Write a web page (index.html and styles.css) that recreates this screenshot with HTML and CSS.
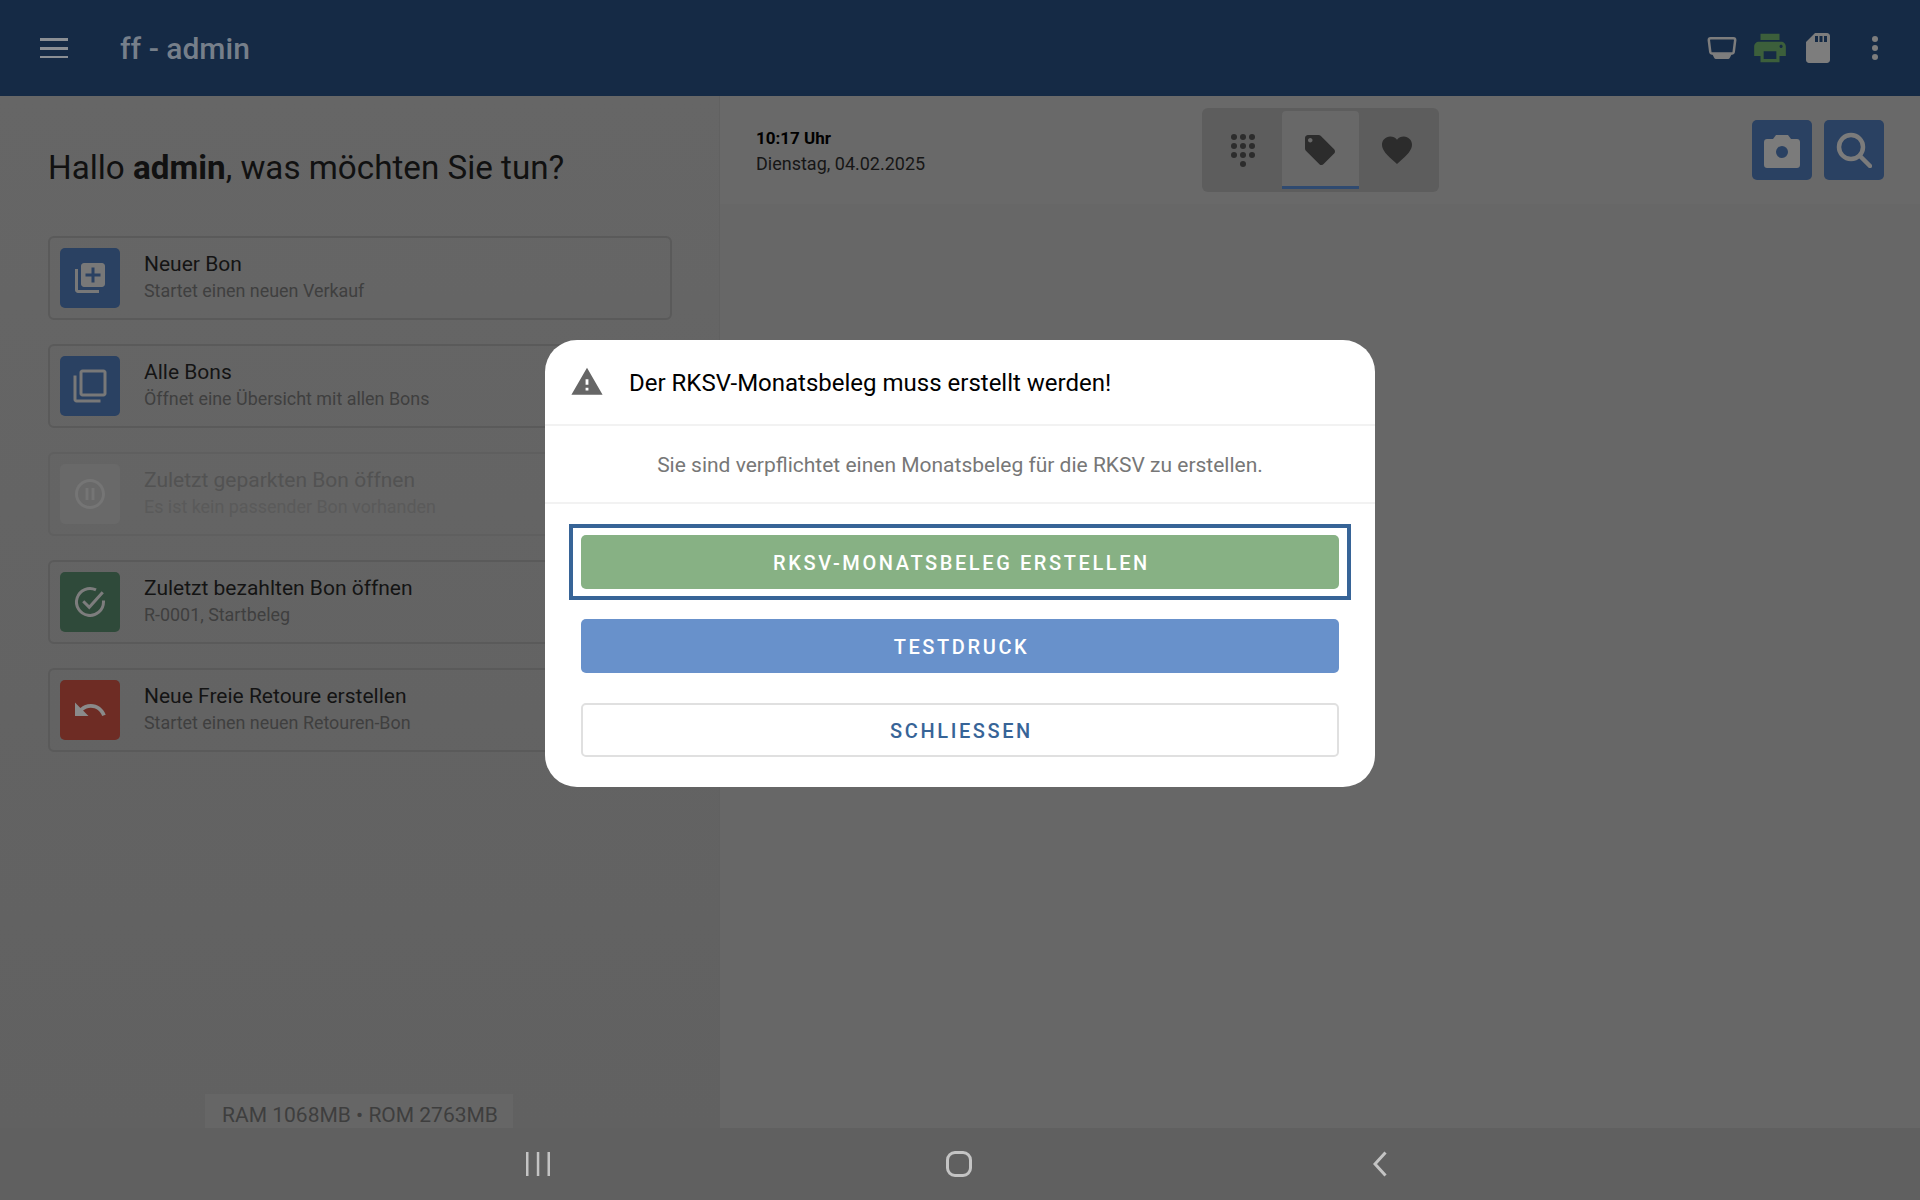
FILE: index.html
```html
<!DOCTYPE html>
<html lang="de">
<head>
  <meta charset="UTF-8" />
  <title>ff - admin</title>
  <meta name="viewport" content="width=device-width, initial-scale=1.0">
  <link rel="stylesheet" href="styles.css">
</head>
<body>
  <div class="app">
    <header class="topbar">
      <svg class="menu-icon" viewBox="0 0 28 20"><path d="M0 0h28v3H0zM0 9h28v3H0zM0 18h28v2.6H0z"/></svg>
      <div class="app-title">ff - admin</div>
      <div class="status-icons">
        <svg class="status-icon grey" viewBox="0 0 36 36"><path d="M6.500 8.300h23c1 0 1.700.8 1.700 1.800l-1.500 12c-.1.7-.7 1.400-1.500 1.400H7.800c-.8 0-1.400-.7-1.500-1.400l-1.500-12c0-1 .7-1.800 1.700-1.800z" fill="none" stroke="currentColor" stroke-width="2.500"/><path d="M8 23.500h20l-2 4c-.5 1-1.300 1.500-2.500 1.500h-11c-1.200 0-2-.5-2.500-1.500z"/></svg>
        <svg class="status-icon printer" viewBox="0 0 24 24"><path d="M19 8H5c-1.660 0-3 1.340-3 3v6h4v4h12v-4h4v-6c0-1.660-1.340-3-3-3zm-3 11H8v-5h8v5zm3-7c-.55 0-1-.45-1-1s.45-1 1-1 1 .45 1 1-.45 1-1 1zm-1-9H6v4h12V3z"/></svg>
        <svg class="status-icon grey" viewBox="0 0 24 24"><path d="M18 2h-8L4.020 8 4 20c0 1.100.9 2 2 2h12c1.100 0 2-.9 2-2V4c0-1.100-.9-2-2-2zm-6 6h-2V4h2v4zm3 0h-2V4h2v4zm3 0h-2V4h2v4z"/></svg>
        <svg class="status-icon grey more" viewBox="0 0 36 36"><circle cx="18" cy="9" r="3"/><circle cx="18" cy="18" r="3"/><circle cx="18" cy="27" r="3"/></svg>
      </div>
    </header>

    <main class="content">
      <section class="start-pane">
        <h1 class="greeting">Hallo <b>admin</b>, was möchten Sie tun?</h1>

        <div class="action-card">
          <div class="action-icon blue">
            <svg viewBox="0 0 24 24"><path d="M4 6H2v14c0 1.100.9 2 2 2h14v-2H4V6zm16-4H8c-1.100 0-2 .9-2 2v12c0 1.100.9 2 2 2h12c1.100 0 2-.9 2-2V4c0-1.100-.9-2-2-2zm-1 9h-4v4h-2v-4H9V9h4V5h2v4h4v2z"/></svg>
          </div>
          <div class="action-text">
            <div class="action-title">Neuer Bon</div>
            <div class="action-sub">Startet einen neuen Verkauf</div>
          </div>
        </div>

        <div class="action-card">
          <div class="action-icon blue">
            <svg viewBox="0 0 24 24"><path d="M3 5H1v16c0 1.100.9 2 2 2h16v-2H3V5zm18-4H7c-1.100 0-2 .9-2 2v14c0 1.100.9 2 2 2h14c1.100 0 2-.9 2-2V3c0-1.100-.9-2-2-2zm0 16H7V3h14v14z"/></svg>
          </div>
          <div class="action-text">
            <div class="action-title">Alle Bons</div>
            <div class="action-sub">Öffnet eine Übersicht mit allen Bons</div>
          </div>
        </div>

        <div class="action-card disabled">
          <div class="action-icon">
            <svg viewBox="0 0 24 24"><path d="M9 16h2V8H9v8zm3-14C6.480 2 2 6.480 2 12s4.480 10 10 10 10-4.480 10-10S17.520 2 12 2zm0 18c-4.410 0-8-3.590-8-8s3.590-8 8-8 8 3.590 8 8-3.590 8-8 8zm1-4h2V8h-2v8z"/></svg>
          </div>
          <div class="action-text">
            <div class="action-title">Zuletzt geparkten Bon öffnen</div>
            <div class="action-sub">Es ist kein passender Bon vorhanden</div>
          </div>
        </div>

        <div class="action-card">
          <div class="action-icon green">
            <svg viewBox="0 0 24 24"><path d="M21 11v1a9 9 0 1 1-5-8.100" fill="none" stroke="currentColor" stroke-width="2"/><path d="M7.500 11.500l4 4 9-10" fill="none" stroke="currentColor" stroke-width="2"/></svg>
          </div>
          <div class="action-text">
            <div class="action-title">Zuletzt bezahlten Bon öffnen</div>
            <div class="action-sub">R-0001, Startbeleg</div>
          </div>
        </div>

        <div class="action-card">
          <div class="action-icon red">
            <svg viewBox="0 0 24 24"><path d="M12.500 8c-2.650 0-5.050.99-6.900 2.600L2 7v9h9l-3.620-3.620c1.390-1.160 3.160-1.880 5.120-1.880 3.540 0 6.550 2.310 7.600 5.500l2.370-.78C21.080 11.030 17.150 8 12.500 8z"/></svg>
          </div>
          <div class="action-text">
            <div class="action-title">Neue Freie Retoure erstellen</div>
            <div class="action-sub">Startet einen neuen Retouren-Bon</div>
          </div>
        </div>

        <div class="mem-info">RAM 1068MB • ROM 2763MB</div>
      </section>

      <section class="item-pane">
        <div class="toolbar">
          <div class="clock">
            <div class="clock-time">10:17 Uhr</div>
            <div class="clock-date">Dienstag, 04.02.2025</div>
          </div>
          <div class="tabs">
            <div class="tab">
              <svg class="tab-grid" viewBox="0 0 24 33"><circle cx="3" cy="3" r="3"/><circle cx="12" cy="3" r="3"/><circle cx="21" cy="3" r="3"/><circle cx="3" cy="12" r="3"/><circle cx="12" cy="12" r="3"/><circle cx="21" cy="12" r="3"/><circle cx="3" cy="21" r="3"/><circle cx="12" cy="21" r="3"/><circle cx="21" cy="21" r="3"/><circle cx="12" cy="30" r="3"/></svg>
            </div>
            <div class="tab active">
              <svg class="tab-icon" viewBox="0 0 24 24"><path d="M21.410 11.580l-9-9C12.050 2.220 11.550 2 11 2H4c-1.100 0-2 .9-2 2v7c0 .55.22 1.050.59 1.420l9 9c.36.36.86.58 1.410.58.55 0 1.050-.22 1.410-.59l7-7c.37-.36.59-.86.59-1.410 0-.55-.23-1.060-.59-1.420zM5.500 7C4.670 7 4 6.330 4 5.500S4.670 4 5.500 4 7 4.670 7 5.500 6.330 7 5.500 7z"/></svg>
            </div>
            <div class="tab">
              <svg class="tab-icon" viewBox="0 0 24 24"><path d="M12 21.350l-1.450-1.320C5.400 15.360 2 12.280 2 8.500 2 5.420 4.420 3 7.500 3c1.740 0 3.410.81 4.500 2.090C13.090 3.810 14.760 3 16.500 3 19.580 3 22 5.420 22 8.500c0 3.780-3.400 6.860-8.550 11.540L12 21.350z"/></svg>
            </div>
          </div>
          <div class="tool-buttons">
            <div class="tool-button">
              <svg viewBox="0 0 36 36"><path fill-rule="evenodd" d="M12 3h12l3 4h6c1.700 0 3 1.300 3 3v23c0 1.700-1.300 3-3 3H3c-1.700 0-3-1.300-3-3V10c0-1.700 1.300-3 3-3h6zm6 11a6 6 0 1 0 0 12 6 6 0 0 0 0-12z"/></svg>
            </div>
            <div class="tool-button">
              <svg viewBox="0 0 36 36"><circle cx="15" cy="15" r="12" fill="none" stroke="currentColor" stroke-width="4.500"/><path d="M24 24l10 10" fill="none" stroke="currentColor" stroke-width="4.500" stroke-linecap="round"/></svg>
            </div>
          </div>
        </div>
      </section>
    </main>

    <nav class="system-nav">
      <div class="nav-slot">
        <svg class="nav-recents" viewBox="0 0 24 24"><path d="M0 0h2.500v24H0zM10.800 0h2.500v24h-2.500zM21.500 0H24v24h-2.500z"/></svg>
      </div>
      <div class="nav-slot"><span class="nav-home"></span></div>
      <div class="nav-slot">
        <svg class="nav-back" viewBox="0 0 14 26"><path d="M12.500 1.500L2 13l10.500 11.500" fill="none" stroke="currentColor" stroke-width="3"/></svg>
      </div>
    </nav>

    <div class="dialog-layer">
      <div class="dialog">
        <div class="dialog-head">
          <svg class="warn-icon" viewBox="0 0 24 24"><path d="M1 21h22L12 2 1 21zm12-3h-2v-2h2v2zm0-4h-2v-4h2v4z"/></svg>
          <div class="dialog-title">Der RKSV-Monatsbeleg muss erstellt werden!</div>
        </div>
        <div class="dialog-body">Sie sind verpflichtet einen Monatsbeleg für die RKSV zu erstellen.</div>
        <div class="dialog-actions">
          <button class="btn btn-green focused">RKSV-Monatsbeleg erstellen</button>
          <button class="btn btn-blue">Testdruck</button>
          <button class="btn btn-plain">Schließen</button>
        </div>
      </div>
    </div>
  </div>
</body>
</html>
```

FILE: styles.css
```css
* {
  box-sizing: border-box;
}
body {
  margin: 0;
  font-family: Roboto, "Liberation Sans", sans-serif;
  background: #676767;
  color: #111;
}
.app {
  position: relative;
  width: 1920px;
  height: 1200px;
  display: flex;
  flex-direction: column;
  overflow: hidden;
}

/* top bar */
.topbar {
  height: 96px;
  flex: none;
  background: #152a45;
  display: flex;
  align-items: center;
  padding: 0 27px 0 40px;
}
.menu-icon {
  width: 28px;
  height: 20px;
  fill: #8b8f94;
}
.app-title {
  margin-left: 52px;
  font-size: 30px;
  font-weight: 500;
  color: #767f8a;
}
.status-icons {
  margin-left: auto;
  display: flex;
  align-items: center;
  gap: 11px;
}
.status-icon {
  width: 36px;
  height: 36px;
}
.status-icon.grey {
  color: #7d7d7d;
  fill: #7d7d7d;
}
.status-icon.printer {
  width: 38px;
  height: 38px;
  fill: #3c5f3b;
}
.status-icon.more {
  margin-left: 10px;
}

.content {
  flex: 1;
  display: flex;
  min-height: 0;
}

/* left column */
.start-pane {
  width: 719px;
  flex: none;
  padding: 52px 47px 0 48px;
  display: flex;
  flex-direction: column;
  background: linear-gradient(#666, #616161);
}
.greeting {
  margin: 0 0 48px;
  font-size: 33.2px;
  line-height: 40px;
  font-weight: 400;
}
.action-card {
  width: 624px;
  height: 84px;
  flex: none;
  margin-bottom: 24px;
  padding: 0 12px;
  display: flex;
  align-items: center;
  gap: 24px;
  border: 2px solid #5a5a5a;
  border-radius: 6px;
}
.action-icon {
  width: 60px;
  height: 60px;
  flex: none;
  margin-left: -2px;
  border-radius: 5px;
  display: flex;
  align-items: center;
  justify-content: center;
  background: #696969;
  color: #757575;
}
.action-icon svg {
  width: 36px;
  height: 36px;
  fill: currentColor;
}
.action-icon.blue {
  background: #2a4162;
  color: #787878;
}
.action-icon.green {
  background: #2f4a3a;
  color: #7d7d7d;
}
.action-icon.red {
  background: #6e2c24;
  color: #8a8a8a;
}
.action-text {
  padding-bottom: 3px;
}
.action-title {
  font-size: 21px;
  line-height: 28px;
  color: #141414;
}
.action-sub {
  font-size: 17.9px;
  line-height: 25px;
  color: #3f3f3f;
}
.action-card.disabled {
  border-color: #5f5f5f;
}
.action-card.disabled .action-title {
  color: #525252;
}
.action-card.disabled .action-sub {
  color: #5a5a5a;
}
.mem-info {
  margin: auto 2px 0 0;
  align-self: center;
  height: 34px;
  padding: 0 15px 0 17px;
  background: #666;
  color: #3e3e3e;
  font-size: 21px;
  line-height: 42px;
  overflow: hidden;
}

/* right column */
.item-pane {
  flex: 1;
  background: #676767;
  border-left: 1px solid #616161;
}
.toolbar {
  height: 108px;
  padding: 0 36px;
  display: grid;
  grid-template-columns: 1fr auto 1fr;
  align-items: center;
  background: #696969;
}
.clock {
  padding-top: 2px;
  font-size: 18px;
  line-height: 25px;
  color: #161616;
}
.clock-time {
  font-size: 17px;
  font-weight: 700;
  color: #000;
}
.tabs {
  width: 237px;
  height: 84px;
  padding: 3px;
  display: flex;
  background: #5d5d5d;
  border-radius: 6px;
}
.tab {
  flex: 1;
  display: flex;
  align-items: center;
  justify-content: center;
}
.tab.active {
  padding-top: 3px;
  background: #686868;
  border-bottom: 3px solid #2f4a70;
  border-radius: 4px 4px 0 0;
}
.tab-icon {
  width: 36px;
  height: 36px;
  fill: #2c2c2c;
}
.tab-grid {
  width: 24px;
  height: 33px;
  fill: #2c2c2c;
}
.tool-buttons {
  display: flex;
  justify-content: flex-end;
  gap: 12px;
}
.tool-button {
  width: 60px;
  height: 60px;
  background: #2a4162;
  border-radius: 5px;
  display: flex;
  align-items: center;
  justify-content: center;
  color: #7b7b7b;
  fill: #7b7b7b;
}
.tool-button svg {
  width: 36px;
  height: 36px;
}

/* dialog */
.dialog-layer {
  position: absolute;
  inset: 0 0 73px 0;
  display: flex;
  align-items: center;
  justify-content: center;
}
.dialog {
  width: 830px;
  background: #fff;
  border-radius: 32px;
}
.dialog-head {
  height: 86px;
  padding: 0 25px;
  display: flex;
  align-items: center;
  gap: 25px;
  border-bottom: 2px solid #f2f2f2;
}
.warn-icon {
  width: 34px;
  height: 34px;
  fill: #666;
}
.dialog-title {
  padding-top: 2px;
  font-size: 24px;
  color: #000;
}
.dialog-body {
  height: 78px;
  line-height: 79px;
  text-align: center;
  font-size: 21px;
  color: #777;
  border-bottom: 2px solid #f2f2f2;
}
.dialog-actions {
  padding: 31px 36px 30px;
  display: flex;
  flex-direction: column;
  gap: 30px;
}
.btn {
  position: relative;
  height: 54px;
  padding: 2px 0 0 3px;
  border: 0;
  border-radius: 5px;
  font-family: inherit;
  font-size: 20px;
  font-weight: 500;
  letter-spacing: 2.6px;
  text-transform: uppercase;
  color: #fff;
}
.btn-green {
  background: #87b184;
}
.btn-blue {
  background: #6891cb;
}
.btn-plain {
  background: #fff;
  border: 2px solid #e0e0e0;
  color: #376497;
}
.focused::after {
  content: "";
  position: absolute;
  inset: -11px -12px;
  border: 4px solid #376497;
}

/* android nav */
.system-nav {
  height: 72px;
  flex: none;
  padding-right: 2px;
  background: #606060;
  display: flex;
  justify-content: center;
}
.nav-slot {
  width: 421px;
  display: flex;
  align-items: center;
  justify-content: center;
}
.nav-recents {
  width: 24px;
  height: 24px;
  fill: #c4c4c4;
}
.nav-home {
  width: 26px;
  height: 26px;
  border: 3px solid #c4c4c4;
  border-radius: 9px;
}
.nav-back {
  width: 14px;
  height: 26px;
  color: #c4c4c4;
}
```
